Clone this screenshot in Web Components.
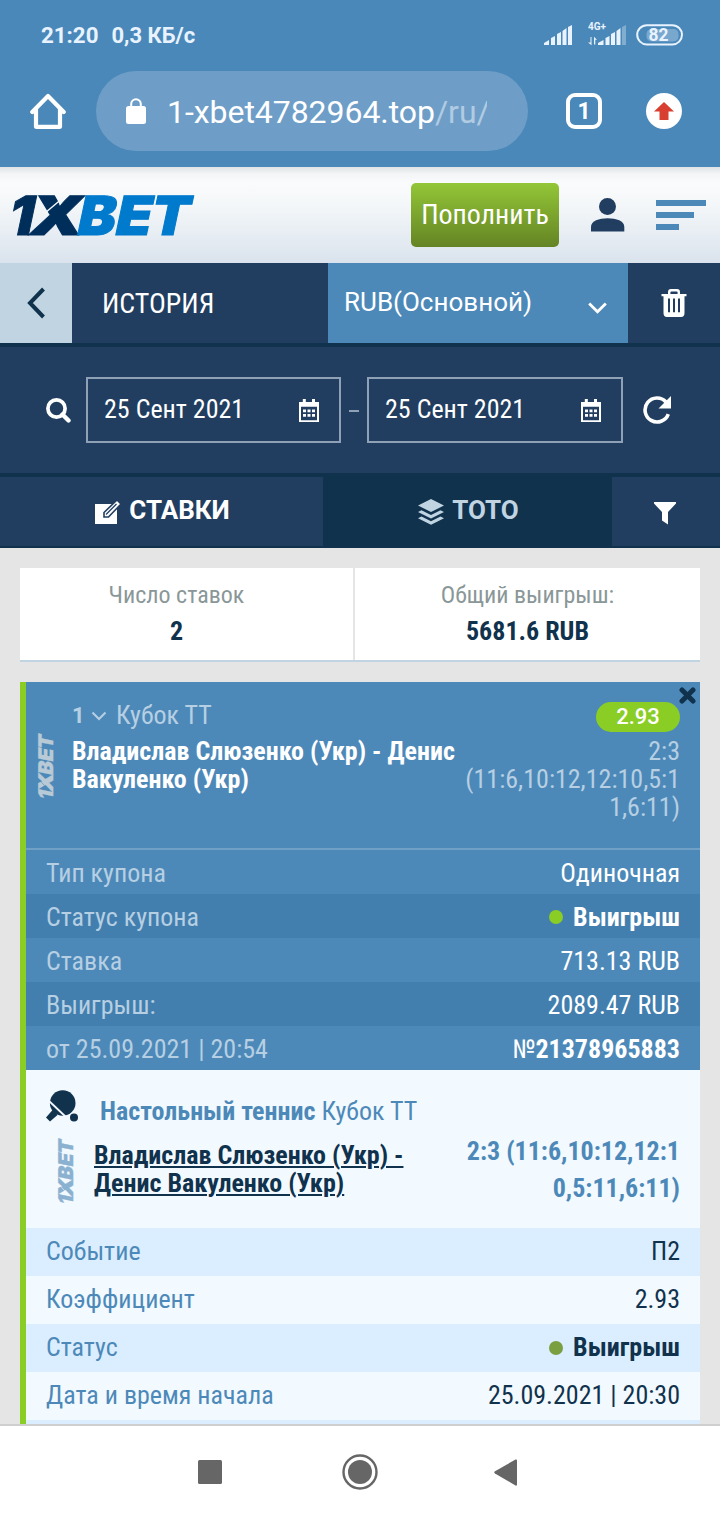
<!DOCTYPE html>
<html lang="ru">
<head>
<meta charset="utf-8">
<title>История ставок</title>
<style>
  html, body { margin: 0; padding: 0; }
  body {
    --condensed: "Roboto Condensed", Roboto, "Liberation Sans", sans-serif;
    width: 720px;
    height: 1520px;
    overflow: hidden;
    display: flex;
    flex-direction: column;
    background: #e5e5e5;
    font-family: Roboto, "Liberation Sans", sans-serif;
  }
</style>
</head>
<body>
  <status-bar></status-bar>
  <browser-bar></browser-bar>
  <site-header></site-header>
  <history-bar></history-bar>
  <date-filter></date-filter>
  <bet-tabs></bet-tabs>
  <bet-history>
    <bet-summary></bet-summary>
    <bet-coupon></bet-coupon>
  </bet-history>
  <nav-bar></nav-bar>

<script>
class StatusBar extends HTMLElement {
  constructor() {
    super();
    this.attachShadow({mode: 'open'}).innerHTML = `
      <style>
        :host {
          height: 70px;
          flex: none;
          display: flex;
          align-items: center;
          box-sizing: border-box;
          padding: 0 37px 0 41px;
          background: #4a88b9;
          color: #e8f3ff;
          font-size: 22.3px;
          font-weight: 700;
        }
        .speed { margin-left: 13px; font-size: 22px; }
        svg { margin-left: auto; display: block; }
      </style>
      <span>21:20</span>
      <span class="speed">0,3 КБ/с</span>
      <svg width="139" height="26" viewBox="544 22 139 26" fill="#e8f3ff">
        <path d="M544 45v-2l5-3v5zM551 45v-7l4-2v9zM557 45v-11l4-2v13zM562.500 45v-14l4-3v17zM568 45v-18l4-2v20z"/>
        <text x="588" y="30.300" font-size="10" font-weight="700" textLength="18" lengthAdjust="spacingAndGlyphs">4G+</text>
        <path d="M590.500 37v5.500h-2.500l3.500 2.800V37zM594 44.500v-7.800l3 3h-1.700v4.800z"/>
        <path d="M598 45v-2l5.500-3v5zM605.500 45v-7l4-2v9zM611 45v-11l4-2v13zM616.500 45v-14l4-3v17z"/>
        <path d="M622 45V27l4-2v20z" opacity=".35"/>
        <rect x="646.500" y="29" width="32" height="12.500" rx="5" opacity=".3"/>
        <rect x="637.200" y="25.200" width="44.800" height="19.200" rx="9.600" fill="none" stroke="#e8f3ff" stroke-width="2"/>
        <text x="648.500" y="41" font-size="17.500" font-weight="700" textLength="20" lengthAdjust="spacingAndGlyphs">82</text>
      </svg>
    `;
  }
}
customElements.define('status-bar', StatusBar);

class BrowserBar extends HTMLElement {
  constructor() {
    super();
    this.attachShadow({mode: 'open'}).innerHTML = `
      <style>
        :host {
          height: 97px;
          flex: none;
          display: flex;
          align-items: flex-start;
          box-sizing: border-box;
          padding: 1px 37px 0 30px;
          background: #4a88b9;
          color: #fff;
        }
        svg { display: block; }
        .home, .tabs, .update { margin-top: 22px; flex: none; }
        .home { margin-top: 21px; }
        .url {
          width: 432px;
          height: 80px;
          box-sizing: border-box;
          margin-left: 30px;
          padding: 0 39px 0 29px;
          border-radius: 40px;
          background: #6e9ec7;
          display: flex;
          align-items: center;
          font-size: 32px;
        }
        .lock { margin-right: 20px; flex: none; }
        .address {
          width: 320px;
          overflow: hidden;
          white-space: nowrap;
          line-height: 44px;
          margin-top: 2px;
          letter-spacing: -.05px;
        }
        .path { color: #b0cbe2; }
        .tabs {
          width: 36px;
          height: 36px;
          box-sizing: border-box;
          margin-left: 38px;
          border: 4px solid #fff;
          border-radius: 9px;
          display: flex;
          align-items: center;
          justify-content: center;
          font-size: 23px;
          font-weight: 700;
        }
        .update { margin-left: 44px; }
      </style>
      <svg class="home" width="36" height="38" viewBox="0 0 36 38" fill="none" stroke="#fff" stroke-width="4.200" stroke-linecap="round" stroke-linejoin="round">
        <path d="M2.300 20L18 4l15.700 16M6 17.500v17.300h24V17.500"/>
      </svg>
      <div class="url">
        <svg class="lock" width="22" height="28" viewBox="0 0 22 28">
          <rect x="1" y="9" width="20" height="18" rx="2.500" fill="#fff"/>
          <path d="M6.200 10V7a4.800 4.800 0 0 1 9.600 0v3" fill="none" stroke="#fff" stroke-width="2"/>
        </svg>
        <div class="address">1-xbet4782964.top<span class="path">/ru/</span></div>
      </div>
      <div class="tabs">1</div>
      <svg class="update" width="36" height="36" viewBox="0 0 36 36">
        <circle cx="18" cy="18" r="18" fill="#fff"/>
        <path d="M18 9l10 9.500h-5.500V27h-9v-8.500H8z" fill="#d93f30"/>
      </svg>
    `;
  }
}
customElements.define('browser-bar', BrowserBar);

// Brand mark; colours come from --first, --second and --cut
class BrandLogo extends HTMLElement {
  constructor() {
    super();
    this.attachShadow({mode: 'open'}).innerHTML = `
      <style>
        :host { display: block; }
        svg { display: block; width: 100%; height: 100%; overflow: visible; }
        text {
          font-family: Inter, sans-serif;
          font-size: 54px;
          font-weight: 900;
          stroke-width: 1;
        }
        .first { fill: var(--first, #002e5b); stroke: var(--first, #002e5b); }
        .second { fill: var(--second, #007acd); stroke: var(--second, #007acd); }
        .cut { stroke: var(--cut, #f4f7f9); stroke-width: 1.5; }
      </style>
      <svg viewBox="0 0 180 40" preserveAspectRatio="none">
        <g transform="translate(0 39.600) skewX(-12)">
          <text class="first" x="-8" y="0" textLength="25" lengthAdjust="spacingAndGlyphs">1</text>
          <text class="first" x="13" y="0" textLength="53" lengthAdjust="spacingAndGlyphs">X</text>
          <text class="second" x="61" y="0" textLength="38" lengthAdjust="spacingAndGlyphs">B</text>
          <text class="second" x="99" y="0" textLength="36" lengthAdjust="spacingAndGlyphs">E</text>
          <text class="second" x="134" y="0" textLength="39" lengthAdjust="spacingAndGlyphs">T</text>
        </g>
        <path class="cut" d="M31 18L50 2"/>
      </svg>
    `;
  }
}
customElements.define('brand-logo', BrandLogo);

class SiteHeader extends HTMLElement {
  constructor() {
    super();
    this.attachShadow({mode: 'open'}).innerHTML = `
      <style>
        :host {
          height: 96px;
          flex: none;
          display: flex;
          align-items: center;
          box-sizing: border-box;
          padding: 0 14px;
          background: linear-gradient(#dfe3e5 0, #f3f5f6 7px, #fafbfc 16px, #f4f7f9 38px, #dae3ed 100%);
        }
        brand-logo { width: 180px; height: 40px; }
        .pay {
          width: 148px;
          height: 64px;
          box-sizing: border-box;
          padding-bottom: 2px;
          margin-left: 217px;
          border-radius: 5px;
          background: linear-gradient(#93c637, #648424);
          color: #fff;
          font-family: var(--condensed);
          font-size: 28px;
          display: flex;
          align-items: center;
          justify-content: center;
        }
        .user { margin-left: 32px; }
        .menu { margin-left: 31px; }
        svg { display: block; flex: none; }
      </style>
      <brand-logo></brand-logo>
      <div class="pay">Пополнить</div>
      <svg class="user" width="34" height="34" viewBox="0 0 34 34" fill="#213e60">
        <circle cx="16.500" cy="8.500" r="8.500"/>
        <path d="M0 33.500v-4.500c0-6 8-8.700 16.700-8.700S33.300 23 33.300 29v4.500z"/>
      </svg>
      <svg class="menu" width="50" height="30" viewBox="0 0 50 30" fill="#4d89b8">
        <path d="M0 0h50v6H0zM0 12h38v6H0zM0 24h23v6H0z"/>
      </svg>
    `;
  }
}
customElements.define('site-header', SiteHeader);

class HistoryBar extends HTMLElement {
  constructor() {
    super();
    this.attachShadow({mode: 'open'}).innerHTML = `
      <style>
        :host {
          height: 80px;
          flex: none;
          display: grid;
          grid-template-columns: 72px 256px 300px 92px;
          border-bottom: 4px solid #10324d;
          background: #213e60;
          color: #fff;
        }
        div { display: flex; align-items: center; box-sizing: border-box; }
        .back { background: #c1d4e2; justify-content: center; }
        .title { padding-left: 30px; font-family: var(--condensed); font-size: 28px; }
        .account {
          padding: 0 21px 2px 16px;
          justify-content: space-between;
          background: #4d89b8;
          font-size: 26px;
        }
        .account svg { margin-top: 12px; }
        .trash { justify-content: center; }
      </style>
      <div class="back">
        <svg width="20" height="34" viewBox="0 0 20 34" fill="none" stroke="#10324d" stroke-width="4">
          <path d="M17.500 3L4 17l13.500 14"/>
        </svg>
      </div>
      <div class="title">ИСТОРИЯ</div>
      <div class="account">
        RUB(Основной)
        <svg width="19" height="12" viewBox="0 0 19 12" fill="none" stroke="#fff" stroke-width="2.800">
          <path d="M1.200 1.500l8.300 8.300 8.300-8.300"/>
        </svg>
      </div>
      <div class="trash">
        <svg width="26" height="28" viewBox="0 0 26 28" fill="#fff">
          <path d="M7 5V3q0-3 3-3h6q3 0 3 3v2h6.500v2.200H23.500V24q0 4-3.500 4H6q-3.500 0-3.500-4V7.200H.500V5zm2.400 0h7.200V3.400q0-1-1-1h-5.200q-1 0-1 1zM7 9.500v13.800h2V9.500zm5 0v13.800h2V9.500zm5 0v13.800h2V9.500z" fill-rule="evenodd"/>
        </svg>
      </div>
    `;
  }
}
customElements.define('history-bar', HistoryBar);

class DateField extends HTMLElement {
  constructor() {
    super();
    this.attachShadow({mode: 'open'}).innerHTML = `
      <style>
        :host {
          height: 66px;
          box-sizing: border-box;
          border: 2px solid #8ea1b6;
          padding: 0 20px 0 16px;
          display: flex;
          align-items: center;
          justify-content: space-between;
        }
        span { margin-top: -3px; }
        svg { display: block; margin-top: 1px; }
      </style>
      <span><slot></slot></span>
      <svg width="20" height="23" viewBox="0 0 20 23" fill="#fff">
        <path d="M0 3h3.800V0h3v3h6.200V0h3v3H20v20H0zm2 4.800V21.300h16V7.800z" fill-rule="evenodd"/>
        <path d="M4 10.500h3v2.800H4zM8.500 10.500h3v2.800h-3zM13 10.500h3v2.800h-3zM4 15h3v2.800H4zM8.500 15h3v2.800h-3zM13 15h3v2.800h-3z"/>
      </svg>
    `;
  }
}
customElements.define('date-field', DateField);

class DateFilter extends HTMLElement {
  constructor() {
    super();
    this.attachShadow({mode: 'open'}).innerHTML = `
      <style>
        :host {
          height: 126px;
          flex: none;
          display: flex;
          align-items: center;
          box-sizing: border-box;
          padding: 0 48px 0 46px;
          background: #213e60;
          color: #fff;
          font-family: var(--condensed);
          font-size: 26px;
        }
        svg { display: block; flex: none; }
        date-field { flex: none; }
        .from { width: 255px; margin-left: 15px; }
        .to { width: 256px; }
        .dash { width: 10px; height: 2px; margin: 2px 8px 0; background: #8ea1b6; }
        .reload { margin-left: 20px; }
      </style>
      <svg width="25" height="25" viewBox="0 0 25 25" fill="none" stroke="#fff">
        <circle cx="10.500" cy="10.500" r="8.600" stroke-width="3.700"/>
        <path d="M16.500 16.500l6 6" stroke-width="4.400" stroke-linecap="round"/>
      </svg>
      <date-field class="from">25 Сент 2021</date-field>
      <span class="dash"></span>
      <date-field class="to">25 Сент 2021</date-field>
      <svg class="reload" width="28" height="28" viewBox="0 0 28 28">
        <path d="M25.300 18.200A12 12 0 1 1 23 6" fill="none" stroke="#fff" stroke-width="3.600"/>
        <path d="M28 0v12.500H15.500z" fill="#fff"/>
      </svg>
    `;
  }
}
customElements.define('date-filter', DateFilter);

class BetTabs extends HTMLElement {
  constructor() {
    super();
    this.attachShadow({mode: 'open'}).innerHTML = `
      <style>
        :host {
          height: 69px;
          flex: none;
          display: grid;
          grid-template-columns: 323px 289px 108px;
          border-top: 4px solid #10324d;
          border-bottom: 2px solid #10324d;
          background: #213e60;
          color: #fff;
          font-size: 26px;
          font-weight: 700;
        }
        div { display: flex; align-items: center; justify-content: center; gap: 8px; padding-left: 2px; }
        svg { display: block; }
        span { margin-top: -4px; }
        .toto { background: #10324d; color: #c1d4e2; }
        .funnel { padding: 3px 2px 0 0; }
      </style>
      <div>
        <svg width="26" height="26" viewBox="0 0 26 26">
          <path d="M0 5h22v20H0z" fill="#fff"/>
          <path d="M9 18v-4.500L22 1l4 4-12.500 13z" fill="#fff" stroke="#213e60" stroke-width="1.600"/>
          <path d="M11 15.500L21.500 5" stroke="#213e60" stroke-width="1.300"/>
        </svg>
        <span>СТАВКИ</span>
      </div>
      <div class="toto">
        <svg width="26" height="26" viewBox="0 0 26 26" fill="#c1d4e2">
          <path d="M13 0l13 6.500L13 13 0 6.500zM0 13l3.500-1.700L13 16l9.500-4.700L26 13l-13 6.500zM0 19.300l3.500-1.700 9.500 4.700 9.500-4.700 3.500 1.700-13 6.500z"/>
        </svg>
        <span>ТОТО</span>
      </div>
      <div class="funnel">
        <svg width="22" height="23" viewBox="0 0 22 23" fill="#fff">
          <path d="M0 0h22v1.500l-8 8.500v12.500l-6-4V10L0 1.500z"/>
        </svg>
      </div>
    `;
  }
}
customElements.define('bet-tabs', BetTabs);

class BetHistory extends HTMLElement {
  constructor() {
    super();
    this.attachShadow({mode: 'open'}).innerHTML = `
      <style>
        :host {
          height: 876px;
          flex: none;
          box-sizing: border-box;
          padding: 20px 20px 0;
          overflow: hidden;
          display: flex;
          flex-direction: column;
          gap: 20px;
          font-family: var(--condensed);
        }
      </style>
      <slot></slot>
    `;
  }
}
customElements.define('bet-history', BetHistory);

class BetSummary extends HTMLElement {
  constructor() {
    super();
    this.attachShadow({mode: 'open'}).innerHTML = `
      <style>
        :host {
          height: 92px;
          flex: none;
          display: grid;
          grid-template-columns: 335px 345px;
          border-bottom: 2px solid #c1d4e2;
          background: #fff;
          color: #10324d;
          line-height: 36px;
        }
        div {
          box-sizing: border-box;
          padding-top: 9px;
          display: flex;
          flex-direction: column;
          align-items: center;
        }
        .count { border-right: 2px solid #e5e5e5; padding-right: 20px; }
        .label { color: #8a9798; font-size: 24px; }
        .value { font-size: 26px; font-weight: 700; }
      </style>
      <div class="count">
        <span class="label">Число ставок</span>
        <span class="value">2</span>
      </div>
      <div>
        <span class="label">Общий выигрыш:</span>
        <span class="value">5681.6 RUB</span>
      </div>
    `;
  }
}
customElements.define('bet-summary', BetSummary);

class CouponRow extends HTMLElement {
  constructor() {
    super();
    this.attachShadow({mode: 'open'}).innerHTML = `
      <style>
        :host {
          display: flex;
          align-items: center;
          justify-content: space-between;
          box-sizing: border-box;
          height: var(--row-height, 44px);
          padding: var(--row-padding, 2px 20px 0);
        }
        .label { color: var(--row-label); }
        .value { display: flex; align-items: center; }
      </style>
      <span class="label">${this.getAttribute('label')}</span>
      <span class="value"><slot></slot></span>
    `;
  }
}
customElements.define('coupon-row', CouponRow);

class BetCoupon extends HTMLElement {
  constructor() {
    super();
    this.attachShadow({mode: 'open'}).innerHTML = `
      <style>
        :host {
          display: block;
          flex: none;
          position: relative;
          border-left: 6px solid #8acd25;
          background: #f2f9ff;
          font-size: 26px;
          line-height: 28px;
          white-space: nowrap;
        }
        .close { position: absolute; top: 5px; right: 4px; }
        .head {
          height: 166px;
          box-sizing: border-box;
          display: grid;
          grid-template-columns: 46px 1fr 216px;
          padding: 20px 20px 0 0;
          background: #4d89b8;
          color: #fff;
        }
        brand-logo {
          width: 64px;
          height: 15px;
          transform: rotate(-90deg);
          --first: #b9cad7;
          --second: #b9cad7;
          --cut: #4d89b8;
        }
        .head brand-logo { margin: 56px 0 0 -12px; }
        .league {
          height: 28px;
          display: flex;
          align-items: center;
          margin: -1px 0 8px;
          color: #b6cfe3;
        }
        .league b { font-family: Roboto, sans-serif; font-size: 22px; width: 10px; margin-top: 2px; }
        .league svg { margin: 2px 9px 0; }
        .names { font-weight: 700; }
        .score {
          color: #b6cfe3;
          text-align: right;
        }
        .odds {
          width: 84px;
          height: 30px;
          margin: 0 0 5px auto;
          border-radius: 15px;
          background: #8acd25;
          color: #fff;
          font-family: Roboto, sans-serif;
          font-size: 22px;
          font-weight: 500;
          display: flex;
          align-items: center;
          justify-content: center;
        }
        .info {
          border-top: 2px solid #70a0c6;
          color: #fff;
          --row-label: #b6cfe3;
        }
        .info coupon-row { background: #4d89b8; }
        .info coupon-row:nth-child(even) { background: #437fae; }
        b { font-weight: 700; }
        .dot {
          width: 14px;
          height: 14px;
          margin-right: 10px;
          border-radius: 50%;
          background: #8acd25;
        }
        .event {
          height: 158px;
          box-sizing: border-box;
          display: grid;
          grid-template-columns: 20px 48px 1fr 216px;
          grid-template-rows: 67px 1fr;
          padding-right: 20px;
          color: #4d89b8;
        }
        .sport {
          grid-column: 2 / 5;
          display: flex;
          padding-top: 20px;
          align-items: flex-start;
        }
        .sport span, .sport b { margin-top: 7px; }
        .sport b { margin-left: 22px; margin-right: 6px; }
        .mark { grid-column: 2; }
        .event brand-logo {
          margin: 26px 0 0 -12px;
          --first: #8bb1d1;
          --second: #8bb1d1;
          --cut: #f2f9ff;
        }
        .event .names {
          padding-top: 4px;
          color: #10324d;
          text-decoration: underline;
          text-decoration-thickness: 2px;
          text-underline-offset: 2px;
        }
        .event .score {
          color: #4d89b8;
          font-weight: 700;
          line-height: 37px;
          margin-top: -4px;
        }
        .details {
          --row-height: 48px;
          --row-padding: 0 20px 2px;
          --row-label: #4d89b8;
          color: #10324d;
        }
        .details coupon-row:nth-child(odd) { background: #dbeeff; }
        .details .dot { background: #7a9f41; margin-top: 2px; }
      </style>
      <svg class="close" width="17" height="17" viewBox="0 0 17 17" stroke="#10324d" stroke-width="5" stroke-linecap="round">
        <path d="M3 3l11 11M14 3L3 14"/>
      </svg>
      <div class="head">
        <div><brand-logo></brand-logo></div>
        <div>
          <div class="league">
            <b>1</b>
            <svg width="16" height="10" viewBox="0 0 16 10" fill="none" stroke="#b6cfe3" stroke-width="2">
              <path d="M1.500 1.500L8 8l6.500-6.500"/>
            </svg>
            <span>Кубок ТТ</span>
          </div>
          <div class="names">Владислав Слюзенко (Укр) - Денис<br>Вакуленко (Укр)</div>
        </div>
        <div class="score">
          <div class="odds">2.93</div>
          2:3<br>(11:6,10:12,12:10,5:1<br>1,6:11)
        </div>
      </div>
      <div class="info">
        <coupon-row label="Тип купона">Одиночная</coupon-row>
        <coupon-row label="Статус купона"><i class="dot"></i><b>Выигрыш</b></coupon-row>
        <coupon-row label="Ставка">713.13 RUB</coupon-row>
        <coupon-row label="Выигрыш:">2089.47 RUB</coupon-row>
        <coupon-row label="от 25.09.2021 | 20:54">№<b>21378965883</b></coupon-row>
      </div>
      <div class="event">
        <div class="sport">
          <svg width="32" height="32" viewBox="0 0 32 32" fill="#10324d">
            <circle cx="16.700" cy="13" r="12.800"/>
            <path d="M7 19.500L0 27.500l4 4L11.500 25z"/>
            <path d="M2.500 10.500L21 28" stroke="#f2f9ff" stroke-width="1.800"/>
            <circle cx="28" cy="27.500" r="4" stroke="#f2f9ff" stroke-width="1.500" paint-order="stroke"/>
          </svg>
          <b>Настольный теннис</b>
          <span>Кубок ТТ</span>
        </div>
        <div class="mark"><brand-logo></brand-logo></div>
        <div class="names">Владислав Слюзенко (Укр) -<br>Денис Вакуленко (Укр)</div>
        <div class="score">2:3 (11:6,10:12,12:1<br>0,5:11,6:11)</div>
      </div>
      <div class="details">
        <coupon-row label="Событие">П2</coupon-row>
        <coupon-row label="Коэффициент">2.93</coupon-row>
        <coupon-row label="Статус"><i class="dot"></i><b>Выигрыш</b></coupon-row>
        <coupon-row label="Дата и время начала">25.09.2021 | 20:30</coupon-row>
        <coupon-row label=""></coupon-row>
      </div>
    `;
  }
}
customElements.define('bet-coupon', BetCoupon);

class NavBar extends HTMLElement {
  constructor() {
    super();
    this.attachShadow({mode: 'open'}).innerHTML = `
      <style>
        :host {
          flex: 1;
          display: flex;
          align-items: center;
          padding: 0 0 2px 198px;
          border-top: 2px solid #cfcfcf;
          background: #fff;
        }
        svg { display: block; }
        .home { margin: 0 116px 0 119.5px; }
      </style>
      <svg width="24" height="24" viewBox="0 0 24 24"><rect width="24" height="24" rx="1.500" fill="#666"/></svg>
      <svg class="home" width="36" height="36" viewBox="0 0 36 36">
        <circle cx="18" cy="18" r="16.500" fill="none" stroke="#666" stroke-width="2.400"/>
        <circle cx="18" cy="18" r="12" fill="#666"/>
      </svg>
      <svg width="24" height="27" viewBox="0 0 24 27"><path d="M1 12.300L21.500.500Q23 0 23 1.500v24q0 1.500-1.500 1L1 14.500q-1.500-1.100 0-2.200z" fill="#666"/></svg>
    `;
  }
}
customElements.define('nav-bar', NavBar);
</script>
</body>
</html>
